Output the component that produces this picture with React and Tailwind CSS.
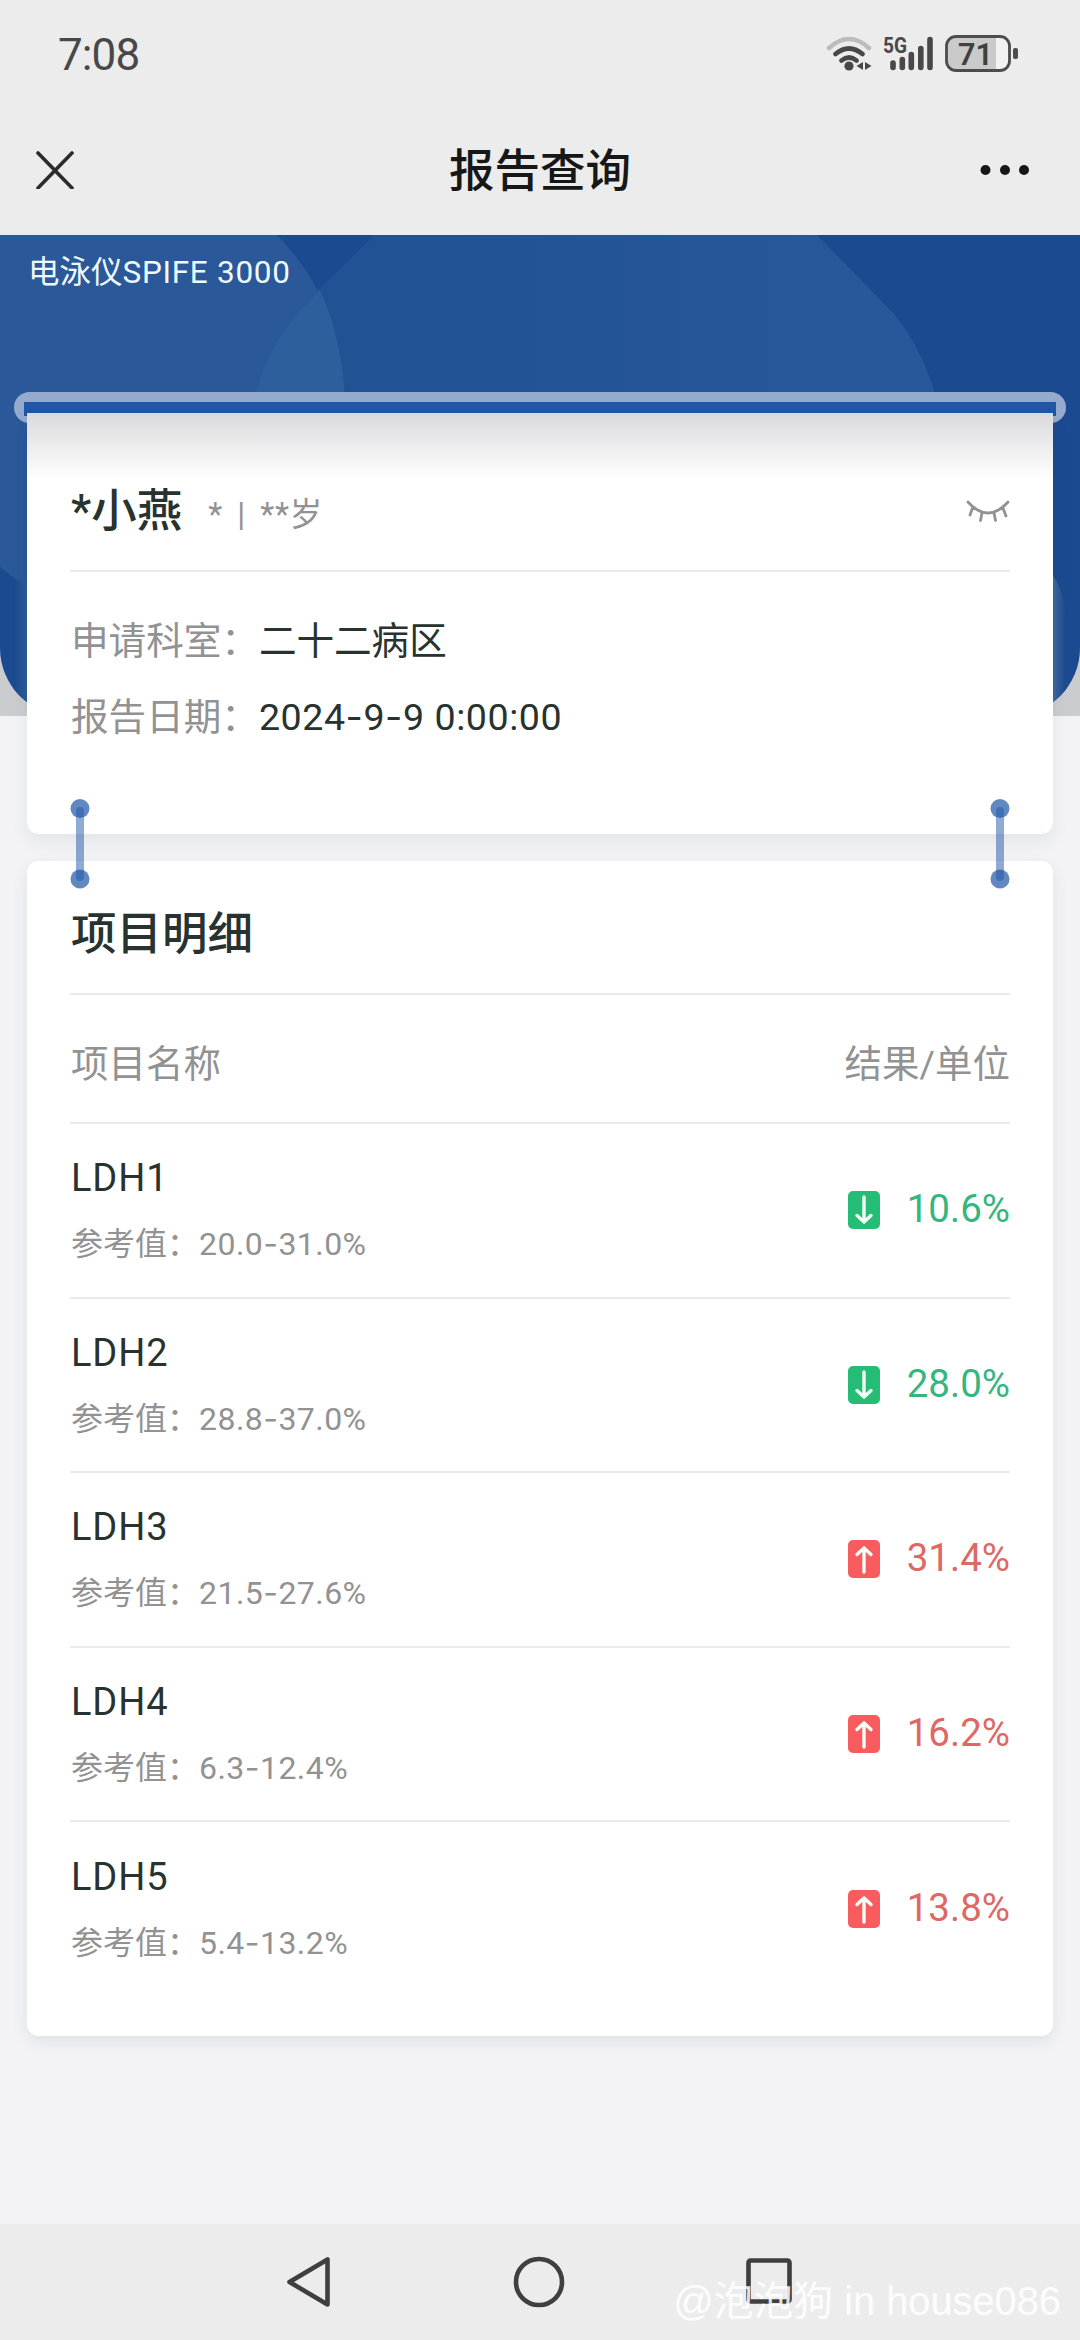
import React from 'react';

const items = [
  { name: 'LDH1', range: '20.0-31.0%', value: '10.6%', trend: 'down' },
  { name: 'LDH2', range: '28.8-37.0%', value: '28.0%', trend: 'down' },
  { name: 'LDH3', range: '21.5-27.6%', value: '31.4%', trend: 'up' },
  { name: 'LDH4', range: '6.3-12.4%', value: '16.2%', trend: 'up' },
  { name: 'LDH5', range: '5.4-13.2%', value: '13.8%', trend: 'up' }
];

// Roboto's hyphen is very short, so it is set in Inter
const Dashed = ({ text }) =>
  text.split('-').map((part, i) => (
    <React.Fragment key={i}>
      {i > 0 && <span className="font-['Inter']">-</span>}
      {part}
    </React.Fragment>
  ));

const StatusBar = () => (
  <div className="h-[106px] pl-[58px] pr-[61px] flex items-center justify-between text-[#484848]">
    <span className="text-[44px] leading-[52px] tracking-[-0.9px] pt-[3px]">7:08</span>
    <svg width="194" height="40" viewBox="826 34 194 40" fill="none" className="mt-[2px] -mr-px">
      <path d="M829 48 Q849 30 869 48" stroke="#bcbcbc" strokeWidth="4.5" strokeLinecap="round" />
      <path d="M835.500 54 Q849 43 862.500 54" stroke="#484848" strokeWidth="4.800" strokeLinecap="round" />
      <path d="M841.500 60.500 Q849 54.500 856.500 60.500" stroke="#484848" strokeWidth="4.800" strokeLinecap="round" />
      <circle cx="849" cy="66" r="4.600" fill="#484848" />
      <path d="M863 62v8l-6.500-4zM865 62v8l6.500-4z" fill="#484848" />
      <text x="883" y="53" fontSize="22" fontWeight="700" textLength="24" lengthAdjust="spacingAndGlyphs" fill="#484848">5G</text>
      <path d="M893 63v4.500M902.300 59.500v8M911.300 54.500v13M920.800 48.500v19M930 39.500v28" stroke="#484848" strokeWidth="5.600" strokeLinecap="round" />
      <rect x="946.500" y="36.500" width="63" height="34" rx="9.500" fill="#f2f2f2" />
      <path d="M956 37h40v33h-40a9 9 0 0 1-9-9v-15a9 9 0 0 1 9-9z" fill="#cacaca" />
      <rect x="946.500" y="36.500" width="63" height="34" rx="9.500" stroke="#4c4c4c" strokeWidth="2.800" />
      <text x="958" y="65" fontSize="32" fontWeight="600" textLength="35" lengthAdjust="spacingAndGlyphs" fill="#404040">71</text>
      <rect x="1013" y="48" width="5" height="11" rx="2" fill="#4c4c4c" />
    </svg>
  </div>
);

const TitleBar = () => (
  <div className="h-[129px] px-9 pt-px flex items-center justify-between border-b-2 border-[#dcf0fa]">
    <svg width="38" height="38" viewBox="0 0 38 38" fill="none" stroke="#2b2b2b" strokeWidth="3.6" strokeLinecap="round">
      <path d="M2 2l34 35M36 2L2 37" />
    </svg>
    <h1 className="text-[45.5px] leading-[60px] font-medium text-[#171717] pt-[3px]">报告查询</h1>
    <svg width="64" height="12" viewBox="0 0 64 12" fill="#171717" className="-ml-[26px]">
      <circle cx="5.500" cy="6" r="5" />
      <circle cx="25" cy="6" r="5" />
      <circle cx="44" cy="6" r="5" />
    </svg>
  </div>
);

const Banner = () => (
  <svg width="1080" height="481" viewBox="0 235 1080 481" className="absolute left-0 top-0">
    <defs>
      <linearGradient id="middle" x1="0" x2="1" y1="0" y2="0">
        <stop offset="0.3" stopColor="#215394" />
        <stop offset="0.85" stopColor="#28579a" />
      </linearGradient>
      <linearGradient id="left-edge" x1="0" x2="1" y1="0" y2="0">
        <stop offset="0.1" stopColor="#1b4a90" />
        <stop offset="1" stopColor="#2e5c98" />
      </linearGradient>
      <linearGradient id="right-edge" x1="1" x2="0" y1="0" y2="0">
        <stop offset="0.1" stopColor="#1b4a90" />
        <stop offset="1" stopColor="#42689f" />
      </linearGradient>
      <clipPath id="panel">
        <path d="M0 235H1080V648A68 68 0 0 1 1012 716H68A68 68 0 0 1 0 648Z" />
      </clipPath>
    </defs>
    <rect y="235" width="1080" height="481" fill="#cbccd0" />
    <g clipPath="url(#panel)">
      <rect y="235" width="1080" height="481" fill="#1b4a90" />
      <path d="M375 235L320 288Q250 352 250 460H946Q940 370 894 314L817 235Z" fill="url(#middle)" />
      <path d="M13 580H27V716H13Z" fill="url(#left-edge)" />
      <path d="M1053 576Q1067 592 1067 640V716H1053Z" fill="url(#right-edge)" />
      <path d="M0 235H277C330 290 345 350 345 410C345 520 260 612 140 612C90 612 30 595 0 567Z" fill="#2a5899" />
      <path d="M320 290Q250 355 250 440H345Q348 350 320 290Z" fill="#2d5f9d" />
    </g>
  </svg>
);

// Clip that ties the two cards together
const Connector = () => (
  <svg width="20" height="90" viewBox="0 0 20 90" fill="#2056a8">
    <rect x="6" y="8" width="8" height="74" rx="4" opacity="0.5" />
    <circle cx="10" cy="9.500" r="9.500" opacity="0.7" />
    <circle cx="10" cy="80" r="9.500" opacity="0.7" />
  </svg>
);

const ClosedEye = () => (
  <svg width="44" height="24" viewBox="0 0 44 24" fill="none" stroke="#929292" strokeWidth="2.800" strokeLinecap="round">
    <path d="M2 2Q22 24 42 2M6.500 8L4 15M16 13L14.500 20.500M28 13L29.500 20.500M37 8L40 16" />
  </svg>
);

const PatientCard = () => (
  <section className="relative mx-[27px] h-[421px] px-[43px] pt-[60px] rounded-b-xl bg-white bg-linear-to-b from-[#dad9dc] to-white to-[66px] shadow-[0_8px_18px_rgba(30,50,60,0.07)]">
    <div className="h-[99px] pl-px pb-[14px] flex items-center border-b-2 border-[#ebebeb]">
      <h2 className="text-[45.5px] leading-[60px] font-medium text-[#28332f] pb-[5px]">*小燕</h2>
      <p className="ml-[26px] text-[32.5px] leading-10 text-[#929292] whitespace-pre">*<span className="mx-[15px]">|</span><span className="tracking-[0.8px]">**</span>岁</p>
      <div className="ml-auto mb-1.5">
        <ClosedEye />
      </div>
    </div>
    <dl className="pt-[31px] pl-px text-[37.6px] leading-[76px]">
      <div className="flex">
        <dt className="text-[#929292]">申请科室：</dt>
        <dd className="text-[#28332f]">二十二病区</dd>
      </div>
      <div className="flex">
        <dt className="text-[#929292]">报告日期：</dt>
        <dd className="text-[#28332f] tracking-[0.55px]"><Dashed text="2024-9-9 0:00:00" /></dd>
      </div>
    </dl>
  </section>
);

const TrendBadge = ({ trend }) => (
  <svg
    width="32"
    height="38"
    viewBox="0 0 32 38"
    fill="none"
    className={trend === 'up' ? 'rounded-[5px] bg-[#f85c5e]' : 'rounded-[5px] bg-[#25bd76]'}
  >
    <path
      d={trend === 'up' ? 'M16 32V9M9 14.5L16 8L23 14.5' : 'M16 6V29M9 24.5L16 31L23 24.5'}
      stroke="#f4fff8"
      strokeWidth="3.400"
      strokeLinecap="round"
    />
  </svg>
);

const ResultRow = ({ item }) => (
  <li className="h-[174.6px] pl-px flex items-center justify-between border-b-2 border-[#ebebeb] last:border-transparent">
    <div>
      <p className="text-[38px] leading-[52px] tracking-[0.9px] text-[#28332f]">{item.name}</p>
      <p className="mt-[16px] text-[32px] leading-[48px] text-[#929292]">
        参考值：<span className="tracking-[0.45px]"><Dashed text={item.range} /></span>
      </p>
    </div>
    <div className="flex items-center">
      <TrendBadge trend={item.trend} />
      <span
        className={
          item.trend === 'up'
            ? 'w-[130px] pb-[2px] text-right text-[38.5px] leading-[52px] text-[#dd6864]'
            : 'w-[130px] pb-[2px] text-right text-[38.5px] leading-[52px] text-[#36b67e]'
        }
      >
        {item.value}
      </span>
    </div>
  </li>
);

const DetailCard = () => (
  <section className="mt-[27px] mx-[27px] h-[1175px] px-[43px] rounded-xl bg-white shadow-[0_6px_16px_rgba(30,60,60,0.09)]">
    <h2 className="h-[134px] pt-[44px] pl-px text-[45.5px] leading-[60px] font-medium text-[#28332f] border-b-2 border-[#ebebeb]">
      项目明细
    </h2>
    <div className="h-[129px] pl-px pt-[10px] flex items-center justify-between text-[37.5px] leading-[56px] text-[#929292] border-b-2 border-[#ebebeb]">
      <span>项目名称</span>
      <span>结果/单位</span>
    </div>
    <ul>
      {items.map(item => (
        <ResultRow key={item.name} item={item} />
      ))}
    </ul>
  </section>
);

const NavBar = () => (
  <nav className="relative h-[116px] pl-[286px] pr-[286px] flex items-center justify-between bg-[#ececec]">
    <svg width="46" height="52" viewBox="0 0 46 52" fill="none" stroke="#3f3f3f" strokeWidth="4.600" strokeLinejoin="round">
      <path d="M41.500 3.500V48.500L3.500 26Z" />
    </svg>
    <svg width="52" height="52" viewBox="0 0 52 52" fill="none" stroke="#3f3f3f" strokeWidth="4.600">
      <circle cx="26" cy="26" r="23" />
    </svg>
    <svg width="48" height="48" viewBox="0 0 48 48" fill="none" stroke="#3f3f3f" strokeWidth="4.600">
      <rect x="2.500" y="2.500" width="41" height="41" rx="2" />
    </svg>
    <span className="absolute right-[19px] bottom-[11px] font-['Liberation_Sans','Noto_Sans_CJK_SC',sans-serif] text-[39.8px] leading-[56px] text-white/85 whitespace-nowrap">
      @泡泡狗 in house086
    </span>
  </nav>
);

export default function App() {
  return (
    <div className="w-[1080px] h-[2340px] flex flex-col overflow-hidden bg-[#f3f3f6] font-['Roboto','Noto_Sans_CJK_SC',sans-serif]">
      <header className="bg-[#ececec]">
        <StatusBar />
        <TitleBar />
      </header>
      <main className="relative flex-1">
        <Banner />
        <p className="relative h-[157px] pl-[28px] pt-[15px] text-[31.5px] leading-[46px] text-[#effaff]">
          电泳仪<span className="tracking-[0.7px]">SPIFE 3000</span>
        </p>
        {/* slot the card slides out of */}
        <div className="relative mx-[14px] h-[31px] -mb-[10px] rounded-full bg-[#94abce] px-[10px] pt-[10px]">
          <div className="h-[14px] bg-[#2056a8]"></div>
        </div>
        <PatientCard />
        <DetailCard />
        <div className="absolute inset-x-[70px] top-[564px] flex justify-between">
          <Connector />
          <Connector />
        </div>
      </main>
      <NavBar />
    </div>
  );
}
